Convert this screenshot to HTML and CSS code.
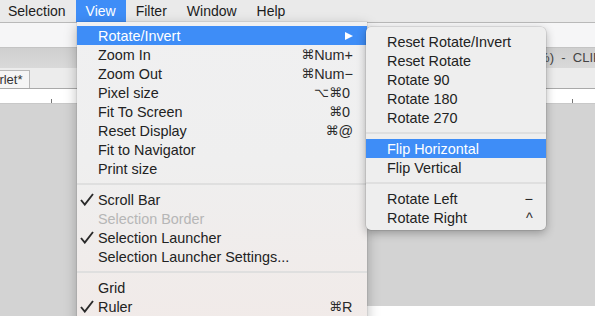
FILE: index.html
```html
<!DOCTYPE html>
<html lang="en">
    <head>
        <meta charset="utf-8">
        <title>View menu</title>
        <link rel="stylesheet" href="styles.css">
    </head>
    <body>
        <div class="screen">
            <div class="menubar">
                <span class="mb-item first">Selection</span>
                <span class="mb-item active">View</span>
                <span class="mb-item">Filter</span>
                <span class="mb-item">Window</span>
                <span class="mb-item">Help</span>
            </div>
            <div class="toolbar"></div>
            <div class="titlebar">
                <span class="title-a">Illustration (16.6%)</span><span class="title-b">  -  CLIP STUDIO PAINT PRO</span>
            </div>
            <div class="tabs">
                <span class="tab">Scarlet*</span>
            </div>
            <div class="ruler"></div>
            <div class="canvas">
                <div class="canvas-foot"></div>
            </div>

            <!-- View menu -->
            <div class="menu view-menu">
                <div class="item selected"><span class="check"></span><span class="label">Rotate/Invert</span><span class="arrow"></span></div>
                <div class="item"><span class="check"></span><span class="label">Zoom In</span><span class="keys"><span class="mod">⌘</span><span class="key">Num+</span></span></div>
                <div class="item"><span class="check"></span><span class="label">Zoom Out</span><span class="keys"><span class="mod">⌘</span><span class="key">Num−</span></span></div>
                <div class="item"><span class="check"></span><span class="label">Pixel size</span><span class="keys"><span class="mod">⌥⌘</span><span class="key">0</span></span></div>
                <div class="item"><span class="check"></span><span class="label">Fit To Screen</span><span class="keys"><span class="mod">⌘</span><span class="key">0</span></span></div>
                <div class="item"><span class="check"></span><span class="label">Reset Display</span><span class="keys"><span class="mod">⌘</span><span class="key">@</span></span></div>
                <div class="item"><span class="check"></span><span class="label">Fit to Navigator</span></div>
                <div class="item"><span class="check"></span><span class="label">Print size</span></div>
                <div class="sep"></div>
                <div class="item"><span class="check"><svg width="14" height="13" viewBox="0 0 14 13"><path d="M1 7 L4.8 11.6 L13 1" fill="none" stroke="#2a2a2a" stroke-width="1.9"/></svg></span><span class="label">Scroll Bar</span></div>
                <div class="item disabled"><span class="check"></span><span class="label">Selection Border</span></div>
                <div class="item"><span class="check"><svg width="14" height="13" viewBox="0 0 14 13"><path d="M1 7 L4.8 11.6 L13 1" fill="none" stroke="#2a2a2a" stroke-width="1.9"/></svg></span><span class="label">Selection Launcher</span></div>
                <div class="item"><span class="check"></span><span class="label">Selection Launcher Settings...</span></div>
                <div class="sep"></div>
                <div class="item"><span class="check"></span><span class="label">Grid</span></div>
                <div class="item"><span class="check"><svg width="14" height="13" viewBox="0 0 14 13"><path d="M1 7 L4.8 11.6 L13 1" fill="none" stroke="#2a2a2a" stroke-width="1.9"/></svg></span><span class="label">Ruler</span><span class="keys"><span class="mod">⌘</span><span class="key">R</span></span></div>
            </div>

            <!-- Rotate/Invert submenu -->
            <div class="menu sub-menu">
                <div class="item"><span class="label">Reset Rotate/Invert</span></div>
                <div class="item"><span class="label">Reset Rotate</span></div>
                <div class="item"><span class="label">Rotate 90</span></div>
                <div class="item"><span class="label">Rotate 180</span></div>
                <div class="item"><span class="label">Rotate 270</span></div>
                <div class="sep"></div>
                <div class="item selected"><span class="label">Flip Horizontal</span></div>
                <div class="item"><span class="label">Flip Vertical</span></div>
                <div class="sep"></div>
                <div class="item"><span class="label">Rotate Left</span><span class="keys"><span class="key">−</span></span></div>
                <div class="item"><span class="label">Rotate Right</span><span class="keys"><span class="key">^</span></span></div>
            </div>
        </div>
    </body>
</html>
```

FILE: styles.css
```css
* {
    margin: 0;
    padding: 0;
    box-sizing: border-box;
}
body {
    font-family: "Liberation Sans", "DejaVu Sans", sans-serif;
    font-size: 14px;
    color: #222;
    background: #fff;
}
.screen {
    position: relative;
    width: 595px;
    height: 316px;
    overflow: hidden;
    display: flex;
    flex-direction: column;
}

/* menu bar */
.menubar {
    display: flex;
    height: 23px;
    background: #eaeaea;
    border-bottom: 1px solid #b9b9b9;
    flex: none;
}
.mb-item {
    padding: 0 10px;
    line-height: 22px;
    color: #1c1c1c;
}
.mb-item.first {
    margin-left: -2px;
}
.mb-item.active {
    background: #3e8df7;
    color: #fff;
}

/* app window behind the menus */
.toolbar {
    height: 25px;
    background: #f6f6f7;
    border-bottom: 1px solid #c4c4c4;
    flex: none;
}
.titlebar {
    display: flex;
    height: 20px;
    background: linear-gradient(#cfcfcf, #d9d9d9);
    font-size: 13px;
    line-height: 20px;
    color: #444;
    white-space: pre;
    flex: none;
}
.title-a {
    width: 554px;
    text-align: right;
    flex: none;
    overflow: hidden;
}
.tabs {
    display: flex;
    align-items: flex-end;
    height: 21px;
    background: #ececec;
    border-bottom: 1px solid #a9a9a9;
    flex: none;
}
.tab {
    margin-left: -30px;
    padding: 0 6px;
    height: 18px;
    line-height: 17px;
    font-size: 13px;
    color: #333;
    background: #f5f5f5;
    border: 1px solid #b8b8b8;
    border-bottom: none;
}
.ruler {
    height: 15px;
    flex: none;
    background:
        linear-gradient(#777, #777) 51px 100% / 1px 4px no-repeat,
        linear-gradient(#777, #777) 572px 100% / 1px 4px no-repeat,
        #fff;
    border-bottom: 1px solid #c8c8c8;
}
.canvas {
    flex: 1;
    display: flex;
    flex-direction: column;
    justify-content: flex-end;
    background: #d3d3d3;
}
.canvas-foot {
    height: 10px;
    margin-left: 340px;
    background: #fff;
}

/* menus */
.menu {
    position: absolute;
    font-size: 14.4px;
    color: #222;
}
.view-menu {
    left: 77px;
    top: 22px;
    width: 290px;
    height: 310px;
    padding-top: 4px;
    background: linear-gradient(#f0f0f1 0, #efefef 45%, #f1eae8 100%);
    box-shadow: 0 4px 12px rgba(0, 0, 0, 0.28), 0 0 0 0.5px rgba(0, 0, 0, 0.12);
}
.sub-menu {
    left: 366px;
    top: 27px;
    width: 180px;
    padding: 5px 0 3px;
    background: #eeeeee;
    border-radius: 5px;
    box-shadow: 0 3px 10px rgba(0, 0, 0, 0.3), 0 0 0 0.5px rgba(0, 0, 0, 0.15);
}
.item {
    display: flex;
    align-items: center;
    height: 19px;
    padding-right: 14px;
    white-space: nowrap;
}
.sub-menu .item {
    padding-left: 21px;
    padding-right: 13px;
}
.item.selected {
    background: #3e8df7;
    color: #fff;
}
.item.disabled {
    color: #b6b6b6;
}
.check {
    display: flex;
    align-items: center;
    width: 21px;
    padding-left: 3px;
    flex: none;
}
.label {
    flex: 1;
}
.keys {
    display: flex;
    color: #2a2a2a;
}
.mod {
    font-family: "DejaVu Sans", sans-serif;
    font-size: 13px;
}
.key {
    min-width: 11px;
}
.sub-menu .key {
    min-width: 7px;
}
.arrow {
    width: 0;
    height: 0;
    border-left: 8px solid #fff;
    border-top: 4.5px solid transparent;
    border-bottom: 4.5px solid transparent;
}
.sep {
    height: 12px;
    display: flex;
    align-items: center;
}
.sep::after {
    content: "";
    flex: 1;
    height: 2px;
    background: #dfdfdf;
}
```
